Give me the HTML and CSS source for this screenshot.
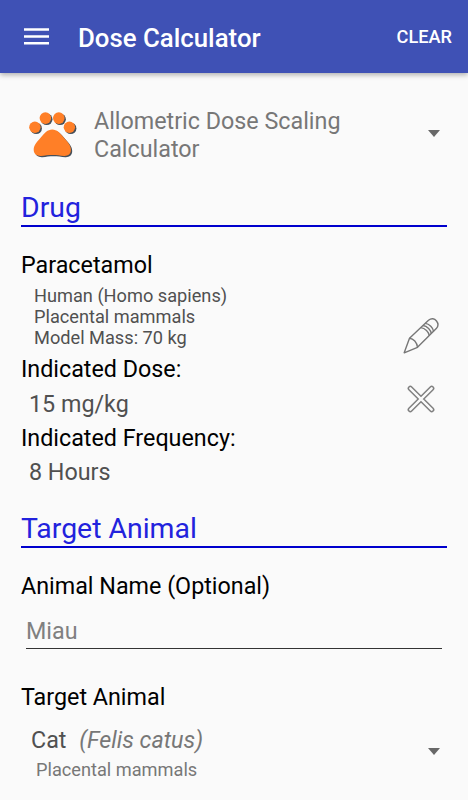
FILE: index.html
```html
<!DOCTYPE html>
<html lang="en">
<head>
    <meta charset="UTF-8">
    <meta name="viewport" content="width=device-width, initial-scale=1.0">
    <title>Dose Calculator</title>
    <link rel="stylesheet" href="styles.css">
</head>
<body>
    <header class="toolbar">
        <button class="menu-btn" aria-label="Menu">
            <svg width="26" height="18" viewBox="0 0 26 18">
                <path d="M1 1.5H26M1 8.5H26M1 15.3H26" stroke="#fff" stroke-width="2.4"/>
            </svg>
        </button>
        <h1>Dose Calculator</h1>
        <button class="clear-btn">CLEAR</button>
    </header>

    <main>
        <div class="calc-select">
            <svg class="paw" width="50" height="50" viewBox="0 0 50 50">
                <defs>
                    <g id="paw">
                        <circle cx="5.9" cy="17.2" r="5.7"/>
                        <circle cx="16.4" cy="8.1" r="5.8"/>
                        <circle cx="29.8" cy="8.1" r="5.8"/>
                        <circle cx="40.4" cy="17.2" r="5.7"/>
                        <path d="M23.2 19.6C28 19.6 31 23.2 34.5 27.3C38.500 31.8 41.900 35.200 41.900 39.800C41.900 44.200 39 46.200 35 46C31 45.700 27.500 45.100 23.300 45.100C19.200 45.100 15.800 45.700 12 46C8 46.200 4.700 44.200 4.700 39.800C4.700 35.200 8 31.800 12 27.300C15.600 23.200 18.500 19.600 23.200 19.600Z"/>
                    </g>
                </defs>
                <use href="#paw" x="1.3" y="1.2" fill="#46505a"/>
                <use href="#paw" fill="#ff7f27"/>
            </svg>
            <div class="calc-name">Allometric Dose Scaling Calculator</div>
            <span class="arrow"></span>
        </div>

        <h2>Drug</h2>
        <section class="drug">
            <div class="drug-info">
                <h3>Paracetamol</h3>
                <p class="model">Human (Homo sapiens)<br>Placental mammals<br>Model Mass: 70 kg</p>
                <dl>
                    <dt>Indicated Dose:</dt>
                    <dd>15 mg/kg</dd>
                    <dt>Indicated Frequency:</dt>
                    <dd>8 Hours</dd>
                </dl>
            </div>
            <div class="drug-actions">
                <button aria-label="Edit">
                    <svg width="36" height="36" viewBox="0 0 36 36" fill="none" stroke="#777" stroke-width="1.4" stroke-linejoin="round">
                        <path d="M1.2 34.8L6.5 20.2L25.5 2.3C28.500 -0.2 31.5 0.5 33.5 3C35.5 5.5 35.6 8 33.3 10.6L14.5 29.3Z"/>
                        <path d="M6.5 20.2C10.5 20.5 14 24.5 14.5 29.3"/>
                        <path d="M17.8 9.6C22 10 26 14 26.3 17.7M20 7.5C24.2 8 28 12 28.4 15.6M22.2 5.4C26.5 6 30 9.5 30.6 13.3"/>
                    </svg>
                </button>
                <button aria-label="Remove">
                    <svg width="28" height="28" viewBox="0 0 28 28" fill="none" stroke-linecap="round">
                        <path d="M3.3 3.3L24.7 24.7M24.7 3.3L3.3 24.7" stroke="#808080" stroke-width="5.4"/>
                        <path d="M3.3 3.3L24.7 24.7M24.7 3.3L3.3 24.7" stroke="#fafafa" stroke-width="2.4"/>
                    </svg>
                </button>
            </div>
        </section>

        <h2>Target Animal</h2>
        <section class="target">
            <label for="animalName">Animal Name (Optional)</label>
            <input type="text" id="animalName" placeholder="Miau">
            <h3>Target Animal</h3>
            <div class="animal-select">
                <div>
                    <div class="animal">Cat <i>(Felis catus)</i></div>
                    <div class="animal-group">Placental mammals</div>
                </div>
                <span class="arrow"></span>
            </div>
        </section>
    </main>
</body>
</html>
```
FILE: styles.css
```css
* {
    box-sizing: border-box;
}
body {
    margin: 0;
    height: 800px;
    overflow: hidden;
    background-color: #fafafa;
    color: #000;
    font-family: Roboto, sans-serif;
    font-size: 23.3px;
}
h1, h2, h3, p, dl, dd {
    margin: 0;
    font-weight: normal;
}
button {
    padding: 0;
    border: none;
    background: none;
    font-family: inherit;
    cursor: pointer;
}
svg {
    display: block;
}
.toolbar {
    display: flex;
    align-items: center;
    height: 73px;
    padding: 0 16px 0 23px;
    background-color: #3f51b5;
    color: #fff;
    box-shadow: 0 2px 5px rgba(0, 0, 0, 0.3);
}
.menu-btn {
    margin-right: 29px;
}
.toolbar h1 {
    flex: 1;
    font-size: 25.8px;
    font-weight: 500;
    line-height: 32px;
    padding-top: 2px;
}
.clear-btn {
    color: #fff;
    font-size: 18.2px;
    font-weight: 500;
}
main {
    padding: 0 21px;
}
.calc-select {
    display: flex;
    align-items: center;
    height: 116px;
    padding: 8px 7px 0 8px;
}
.calc-name {
    flex: 1;
    margin-left: 15px;
    padding: 1px 60px 0 0;
    color: #777;
    line-height: 27.4px;
}
.arrow {
    margin-bottom: 4px;
    border-left: 6.5px solid transparent;
    border-right: 6.5px solid transparent;
    border-top: 7px solid #686868;
}
h2 {
    height: 38px;
    line-height: 37px;
    border-bottom: 2px solid #0000cd;
    color: #2222dd;
    font-size: 28.4px;
}
h3 {
    font-size: inherit;
    line-height: 28px;
}
.drug {
    display: flex;
    justify-content: space-between;
    height: 283px;
    padding-top: 24px;
}
.model {
    padding: 6px 0 0 13px;
    color: #505050;
    font-size: 18.2px;
    line-height: 21.2px;
}
dl {
    padding-top: 3.6px;
    line-height: 34.4px;
}
dd {
    padding-left: 8px;
    color: #505050;
}
.drug-actions {
    display: flex;
    flex-direction: column;
    align-items: center;
    gap: 31px;
    padding: 67px 8px 0 0;
}
.target {
    padding-top: 24px;
}
.target label {
    display: block;
    line-height: 28px;
}
.target input {
    display: block;
    width: calc(100% - 10px);
    height: 35px;
    margin: 14px 5px 34px;
    padding: 0 0 1px;
    border: none;
    border-bottom: 1px solid #333;
    border-radius: 0;
    background: none;
    font: inherit;
    outline: none;
}
.target input::placeholder {
    color: #808080;
}
.animal-select {
    display: flex;
    align-items: center;
    justify-content: space-between;
    padding: 15px 7px 0 10px;
}
.animal {
    color: #505050;
    line-height: 28px;
}
.animal i {
    margin-left: 7px;
    color: #777;
}
.animal-group {
    padding: 5px 0 0 5px;
    color: #777;
    font-size: 18.2px;
    line-height: 22px;
}
```
